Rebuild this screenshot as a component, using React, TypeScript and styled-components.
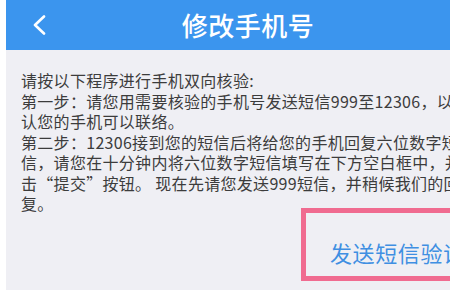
import React from "react";
import styled, { createGlobalStyle } from "styled-components";

const GlobalStyle = createGlobalStyle`
  html, body {
    margin: 0;
    padding: 0;
    background: #ffffff;
  }
  body {
    font-family: "Noto Sans CJK SC", "Noto Sans", sans-serif;
  }
`;

// the screenshot is a crop of a wider phone page
const Viewport = styled.div`
  width: 450px;
  height: 300px;
  overflow: hidden;
`;

const Page = styled.div`
  width: 484px;
  padding-left: 6px;
  height: 300px;
  background: #ffffff;
`;

const Header = styled.div`
  position: relative;
  height: 50px;
  background: #3b95ee;
  display: flex;
  align-items: center;
  justify-content: center;
`;

const BackButton = styled.button`
  position: absolute;
  left: 18px;
  top: 12px;
  width: 30px;
  height: 26px;
  padding: 0;
  border: none;
  background: transparent;
  display: flex;
  align-items: center;
  justify-content: center;
`;

const Title = styled.h1`
  margin: 0;
  color: #ffffff;
  font-size: 26px;
  font-weight: 500;
  letter-spacing: 0.5px;
  line-height: 50px;
`;

const Body = styled.div`
  background: #efeff4;
  height: 240px;
  padding: 20px 0 0 15px;
  box-sizing: border-box;
  overflow: hidden;
`;

const Notice = styled.div`
  color: #3c3c3c;
  font-size: 16px;
  letter-spacing: 0.3px;
  line-height: 20.5px;
`;

const Line = styled.div`
  white-space: pre;
`;

const SendRow = styled.div`
  display: flex;
  justify-content: flex-start;
  margin-top: -6px;
  padding-left: 280px;
`;

const SendButton = styled.button`
  width: 220px;
  height: 73px;
  box-sizing: border-box;
  border: 5px solid #f06b90;
  background: transparent;
  color: #3f8fe2;
  font-family: "Noto Sans CJK SC", "Noto Sans", sans-serif;
  font-size: 22px;
  letter-spacing: 0.6px;
  text-align: left;
  padding: 16px 0 0 24px;
  white-space: nowrap;
`;

const lines = [
  "请按以下程序进行手机双向核验:",
  "第一步：请您用需要核验的手机号发送短信999至12306，以便确",
  "认您的手机可以联络。",
  "第二步：12306接到您的短信后将给您的手机回复六位数字短",
  "信，请您在十分钟内将六位数字短信填写在下方空白框中，并点",
  "击“提交”按钮。 现在先请您发送999短信，并稍候我们的回",
  "复。",
];

const App: React.FC = () => {
  return (
    <Viewport>
      <GlobalStyle />
      <Page>
        <Header>
          <BackButton>
            <svg width="16" height="20" viewBox="0 0 16 20" fill="none">
              <path
                d="M13 1.5 L4 10 L13 18.5"
                stroke="#ffffff"
                strokeWidth="2.6"
                strokeLinecap="round"
                strokeLinejoin="round"
              />
            </svg>
          </BackButton>
          <Title>修改手机号</Title>
        </Header>
        <Body>
          <Notice>
            {lines.map((text) => (
              <Line key={text}>{text}</Line>
            ))}
          </Notice>
          <SendRow>
            <SendButton>发送短信验证码</SendButton>
          </SendRow>
        </Body>
      </Page>
    </Viewport>
  );
};

export default App;
